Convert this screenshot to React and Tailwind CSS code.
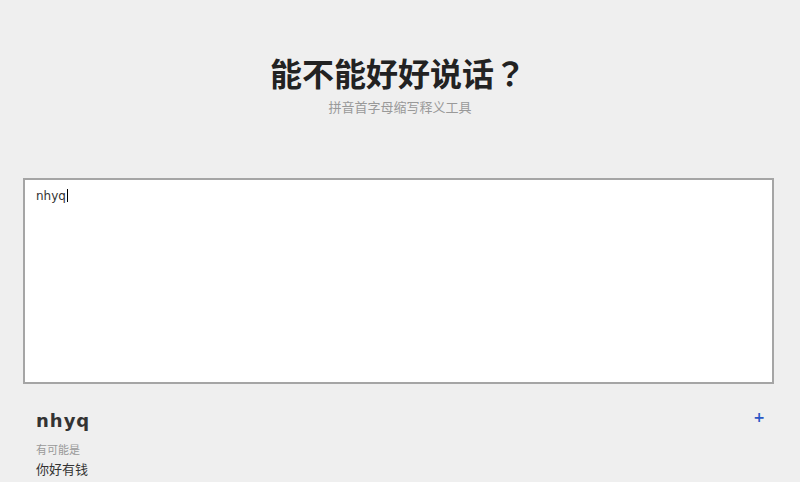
import React from "react";

export default function App() {
  return (
    <div className="w-[800px] h-[482px] overflow-hidden bg-[#efefef] font-['Liberation_Sans','Noto_Sans_CJK_SC',sans-serif]">
      <div className="flex flex-col items-center pt-[50px]">
        <h1 className="text-[32px] leading-[44px] font-bold text-[#222] font-['Noto_Sans_CJK_SC',sans-serif] -ml-[4px]">
          能不能好好说话<span className="font-['Noto_Sans_CJK_TC',sans-serif]">？</span>
        </h1>
        <p className="mt-[5px] text-[13px] leading-[16px] text-[#999] font-['Noto_Sans_CJK_SC',sans-serif]">拼音首字母缩写释义工具</p>
      </div>
      <div className="pl-[23px] mt-[63px]">
        <div className="w-[751px] h-[206px] bg-white border-2 border-[#a5a5a5] px-[11px] pt-[3px]">
          <span className="text-[12px] text-[#333] font-['DejaVu_Sans',sans-serif]">nhyq</span>
          <span className="inline-block w-[1px] h-[13px] bg-black align-[-2px] ml-[1px]"></span>
        </div>
      </div>
      <div className="pl-[36px] w-[765px] pt-[25px] flex justify-between">
        <div className="flex flex-col">
          <div className="text-[18px] leading-[24px] font-bold text-[#333] tracking-[1px] font-['DejaVu_Sans',sans-serif]">nhyq</div>
          <div className="mt-[9px] text-[11px] leading-[14px] text-[#999] font-['Noto_Sans_CJK_SC',sans-serif]">有可能是</div>
          <div className="mt-[4px] text-[13px] leading-[18px] text-[#333] font-['Noto_Sans_CJK_SC',sans-serif]">你好有钱</div>
        </div>
        <div className="-mt-[4px]">
          <span className="text-[14px] font-bold text-[#2b57c5] leading-[18px] font-['DejaVu_Sans',sans-serif]">+</span>
        </div>
      </div>
    </div>
  );
}
